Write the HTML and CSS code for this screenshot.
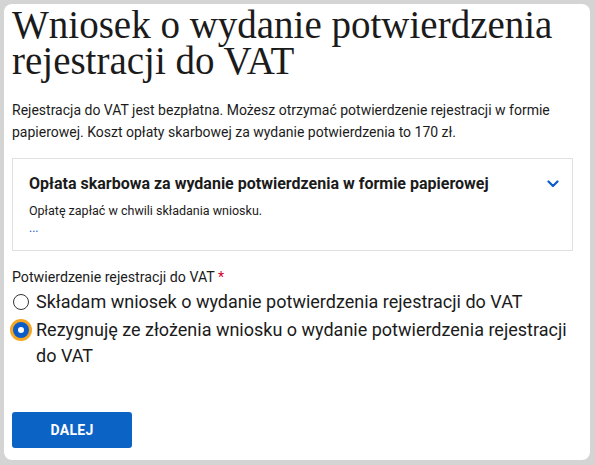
FILE: index.html
```html
<!DOCTYPE html>
<html lang="pl">
<head>
<meta charset="utf-8">
<link rel="stylesheet" href="styles.css">
</head>
<body>
<main class="card">
  <h1 class="title">Wniosek o wydanie potwierdzenia rejestracji do VAT</h1>
  <p class="intro">Rejestracja do VAT jest bezpłatna. Możesz otrzymać potwierdzenie rejestracji w formie papierowej. Koszt opłaty skarbowej za wydanie potwierdzenia to 170 zł.</p>
  <section class="accordion">
    <div class="acc-head">
      <span class="acc-title">Opłata skarbowa za wydanie potwierdzenia w formie papierowej</span>
      <svg class="chevron" width="12" height="8" viewBox="0 0 12 8"><path d="M1.5 1.5 L6 6 L10.5 1.5" fill="none" stroke="#0b5cc8" stroke-width="2.2" stroke-linecap="round" stroke-linejoin="round"/></svg>
    </div>
    <p class="acc-text">Opłatę zapłać w chwili składania wniosku.</p>
    <p class="acc-more">...</p>
  </section>
  <fieldset class="field">
    <legend class="label">Potwierdzenie rejestracji do VAT <span class="req">*</span></legend>
    <label class="radio">
      <span class="dot"></span>
      <span class="rtext">Składam wniosek o wydanie potwierdzenia rejestracji do VAT</span>
    </label>
    <label class="radio">
      <span class="dot checked"></span>
      <span class="rtext">Rezygnuję ze złożenia wniosku o wydanie potwierdzenia rejestracji do VAT</span>
    </label>
  </fieldset>
  <button class="btn" type="button">DALEJ</button>
</main>
</body>
</html>
```
FILE: styles.css
```css
html, body {
  margin: 0;
  padding: 0;
  background: #d4d4d4;
}
body {
  padding: 4px 5px 5px 4px;
  font-family: Roboto, "Noto Sans", sans-serif;
  color: #1b1b1b;
}
.card {
  background: #fff;
  border-radius: 8px;
  height: 456px;
  box-sizing: border-box;
  padding: 3px 17px 0 8px;
}
.title {
  font-family: "Liberation Serif", "Times New Roman", serif;
  font-weight: 400;
  font-size: 39px;
  line-height: 36px;
  margin: 0;
  color: #1b1b1b;
}
.intro {
  font-size: 14px;
  line-height: 22px;
  margin: 20px 0 15px;
}
.accordion {
  border: 1px solid #e0e0e0;
  padding: 14px 13px 13px 16px;
}
.acc-head {
  display: flex;
  justify-content: space-between;
  align-items: center;
}
.acc-title {
  font-weight: 700;
  font-size: 16px;
  line-height: 22px;
}
.acc-text {
  font-size: 12.5px;
  line-height: 18px;
  margin: 7px 0 0;
}
.acc-more {
  font-size: 12px;
  line-height: 18px;
  margin: -1px 0 0;
  color: #0b5cc8;
}
.field {
  border: 0;
  margin: 16px 0 0;
  padding: 0;
}
.label {
  padding: 0;
  font-size: 14.2px;
  line-height: 20px;
  margin-bottom: 2px;
}
.req {
  color: #d4002e;
}
.radio {
  display: flex;
  align-items: flex-start;
  gap: 7px;
  font-size: 18px;
  line-height: 26px;
  margin-bottom: 2px;
}
.dot {
  flex: none;
  width: 16px;
  height: 16px;
  box-sizing: border-box;
  border: 1.5px solid #333;
  border-radius: 50%;
  margin: 5px 0 0 1px;
  background: #fff;
}
.dot.checked {
  border: 5px solid #0b5cc8;
  box-shadow: 0 0 0 3px #f5a623;
}
.btn {
  margin-top: 41px;
  width: 120px;
  height: 36px;
  border: 0;
  border-radius: 3px;
  background: #0b63c6;
  color: #fff;
  font-family: Roboto, sans-serif;
  font-weight: 700;
  font-size: 14px;
  letter-spacing: 0.3px;
}
```
